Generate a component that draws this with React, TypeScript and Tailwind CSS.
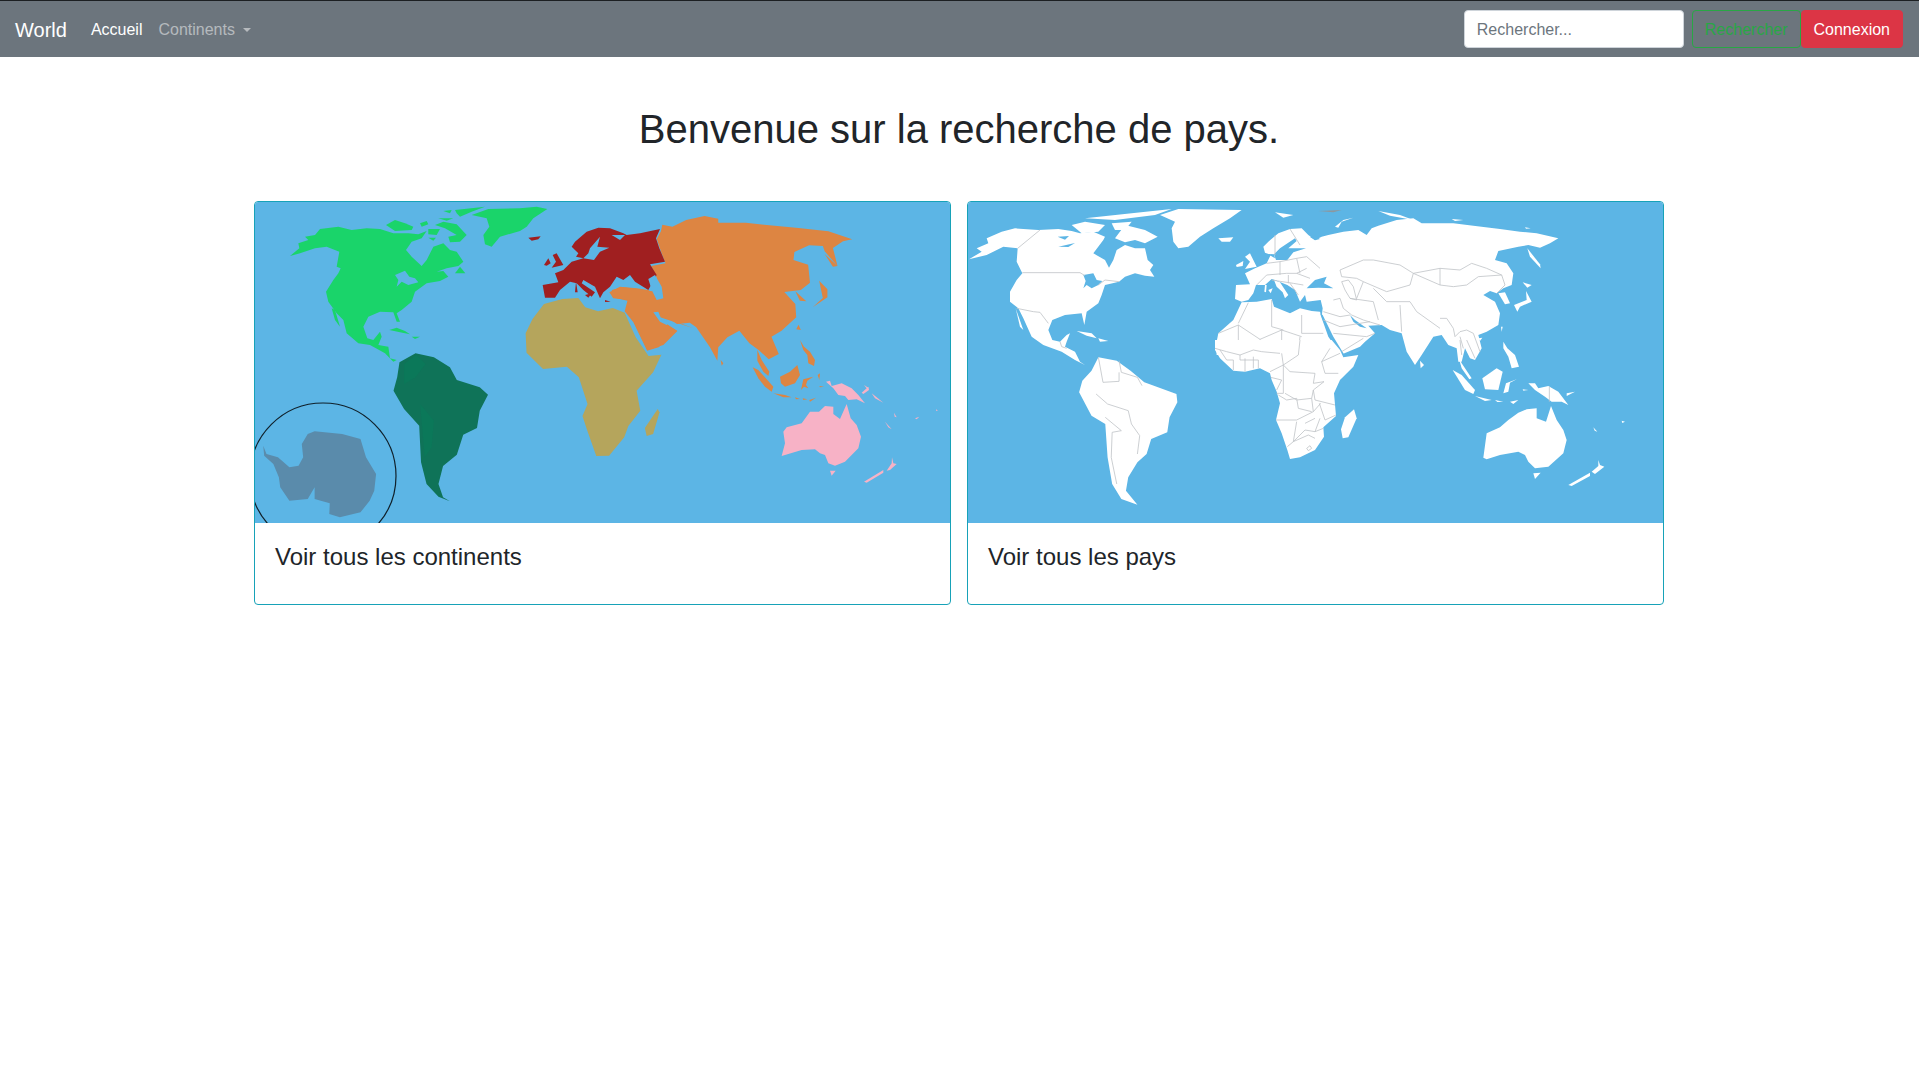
type Shape = { fill: string; d: string };
type Crop = { x: number; y: number; shapes: Shape[]; lines?: string[] };

const BLUE = "#5cb5e5";
const GREEN = "#1ad46a";
const RED = "#a01f20";
const ORANGE = "#dd8542";
const OLIVE = "#b5a55c";
const TEAL = "#0f7358";
const PINK = "#f7b2c6";
const STEEL = "#5a8bab";
const WHITE = "#ffffff";

const shapes = (fill: string, list: string[]): Shape[] => list.map((d) => ({ fill, d }));

// older tracing, stretched coordinates
const CONTINENT_BASE: Shape[] = [
  ...shapes(ORANGE, [
    "M905 122 L908 102 L930 108 L960 88 L1000 76 L1030 84 L1030 96 L1090 96 L1130 102 L1205 112 L1270 122 L1322 146 L1302 152 L1280 172 L1290 226 L1262 182 L1258 166 L1228 164 L1196 184 L1194 208 L1226 222 L1230 276 L1210 298 L1174 304 L1198 340 L1200 380 L1168 420 L1146 438 L1162 490 L1140 506 L1120 480 L1098 458 L1076 420 L1050 440 L1030 470 L1028 510 L1012 470 L982 410 L968 396 L940 400 L902 366 L896 376 L918 402 L940 420 L900 470 L875 480 L845 395 L826 362 L832 330 L800 320 L798 298 L822 290 L858 296 L886 302 L896 262 L884 226 L915 218 L905 182 L896 145 Z",
    "M1262 190 L1290 226 L1280 228 Z",
    "M1236 350 L1268 320 L1268 296 L1250 270 L1258 322 Z",
    "M1198 302 L1222 332 L1208 330 Z",
    "M1205 402 L1210 418 L1200 416 Z",
  ]),
  ...shapes(OLIVE, [
    "M650 340 L690 325 L725 322 L740 350 L768 362 L800 352 L826 366 L850 440 L878 496 L906 492 L888 545 L852 600 L860 660 L834 706 L825 740 L792 795 L764 796 L744 718 L734 676 L745 640 L726 560 L700 528 L648 535 L612 486 L610 428 L625 385 Z",
    "M898 655 L902 665 L888 730 L874 736 L870 712 Z",
  ]),
  ...shapes(TEAL, [
    "M335 515 L370 488 L410 500 L445 530 L460 568 L510 590 L528 612 L510 660 L504 712 L474 732 L460 792 L430 826 L420 880 L430 920 L445 932 L420 918 L394 880 L382 815 L378 705 L345 655 L322 600 L330 560 Z",
  ]),
  ...shapes("#0b7859", ["M345 520 L372 492 L392 520 L370 560 L345 580 Z", "M380 640 L410 690 L405 770 L390 800 Z"]),
  ...shapes(STEEL, [
    "M38 765 L45 790 L70 800 L95 830 L115 825 L125 800 L122 760 L135 730 L150 722 L210 730 L250 745 L262 800 L284 850 L280 900 L270 930 L250 965 L205 980 L182 970 L183 938 L150 925 L150 890 L135 925 L95 930 L75 890 L72 860 L60 820 L40 795 Z",
  ]),
];

const CONTINENT_CROPS: Crop[] = [
  {
    x: 280,
    y: 205,
    shapes: [
      ...shapes(GREEN, [
        "M30 153 L58 130 L55 115 L85 105 L75 95 L105 90 L120 72 L175 65 L215 75 L260 70 L300 72 L340 85 L385 85 L415 88 L440 78 L425 100 L395 110 L378 135 L395 155 L425 183 L440 165 L460 125 L490 115 L510 135 L530 140 L550 170 L535 183 L500 190 L470 200 L490 198 L505 215 L480 228 L440 235 L405 260 L395 290 L365 315 L350 325 L360 350 L350 350 L340 322 L300 320 L265 335 L250 365 L262 400 L280 405 L300 380 L305 395 L295 420 L325 425 L330 460 L350 465 L340 470 L315 445 L270 420 L235 415 L200 385 L190 345 L170 325 L145 290 L138 260 L160 225 L175 205 L182 190 L170 185 L178 140 L140 125 L105 130 L60 145 Z",
        "M155 310 L165 315 L180 365 L165 345 Z",
        "M318 60 L345 45 L375 55 L400 65 L395 75 L345 78 Z",
        "M420 55 L440 48 L445 58 L425 65 Z",
        "M445 72 L480 72 L470 90 L445 88 Z",
        "M465 60 L490 50 L530 58 L560 90 L540 110 L510 112 L505 95 L530 90 L495 70 Z",
        "M445 98 L468 98 L460 107 Z",
        "M475 40 L520 40 L500 47 Z",
        "M490 18 L515 15 L510 25 Z",
        "M525 15 L615 5 L575 20 L540 35 L530 25 Z",
        "M575 30 L625 12 L720 10 L770 5 L802 12 L760 40 L740 65 L720 78 L660 95 L635 125 L615 118 L610 90 L628 65 L620 40 Z",
        "M525 205 L540 185 L556 205 Z",
        "M328 375 L350 368 L375 378 L390 388 L360 382 Z",
        "M395 395 L420 395 L405 402 Z",
      ]),
      ...shapes(BLUE, ["M345 210 L375 197 L388 215 L405 220 L415 232 L385 240 L365 230 L350 245 L355 225 Z"]),
    ],
  },
  {
    x: 520,
    y: 205,
    shapes: [
      ...shapes(ORANGE, [
        "M268 262 L300 245 L350 250 L385 255 L420 300 L470 350 L520 370 L400 330 L472 378 L430 420 L382 435 L325 318 L328 285 L280 280 Z",
      ]),
      ...shapes(RED, [
        "M68 240 L115 232 L105 205 L130 195 L155 170 L190 160 L168 155 L175 145 L155 125 L165 110 L200 80 L235 68 L270 70 L310 85 L320 90 L360 85 L420 72 L408 100 L418 130 L435 170 L390 178 L410 210 L385 255 L345 230 L330 210 L310 225 L290 215 L270 245 L250 262 L240 280 L225 245 L190 225 L185 235 L225 262 L215 275 L190 255 L170 235 L150 230 L120 255 L105 278 L75 278 Z",
        "M72 180 L85 160 L92 175 L80 182 Z",
        "M98 150 L110 145 L130 180 L95 188 L108 170 Z",
        "M25 98 L62 94 L55 103 L35 107 Z",
        "M195 270 L215 265 L205 278 Z",
        "M168 230 L173 262 L165 262 Z",
        "M255 285 L272 290 L255 291 Z",
      ]),
      ...shapes(BLUE, [
        "M210 130 L240 95 L232 125 L268 128 L240 140 L222 165 L190 160 L205 145 Z",
        "M275 90 L315 90 L300 105 Z",
        "M385 222 L405 210 L425 245 L430 280 L410 285 L395 255 Z",
        "M400 322 L415 320 L425 345 L450 350 L440 360 L420 350 Z",
      ]),
    ],
  },
  {
    x: 720,
    y: 340,
    shapes: [
      ...shapes(ORANGE, [
        "M112 30 L125 60 L148 95 L145 108 L130 95 L112 62 Z",
        "M98 82 L115 90 L160 140 L155 155 L135 140 L115 115 Z",
        "M180 110 L210 95 L232 75 L240 105 L225 130 L195 140 L183 130 Z",
        "M243 150 L250 118 L280 110 L262 122 L258 135 L265 145 L252 140 Z",
        "M240 0 L252 20 L270 35 L285 60 L282 78 L265 70 L262 45 L250 30 Z",
        "M160 160 L195 165 L215 172 L190 172 Z",
        "M225 172 L240 177 L228 178 Z",
        "M248 175 L262 178 L250 180 Z",
        "M268 180 L288 173 L270 185 Z",
        "M293 105 L300 100 L298 120 Z",
        "M298 138 L312 140 L300 142 Z",
        "M2 60 L10 70 L5 77 Z",
      ]),
      ...shapes(PINK, [
        "M318 125 L330 122 L335 138 L365 130 L395 145 L415 165 L435 190 L410 178 L385 180 L375 168 L355 165 L340 145 Z",
        "M190 275 L200 262 L245 250 L270 215 L297 215 L315 198 L340 200 L340 222 L360 237 L380 192 L392 235 L410 255 L423 290 L415 325 L375 365 L345 377 L325 370 L315 345 L300 340 L285 328 L245 330 L185 348 L195 310 Z",
        "M330 392 L347 392 L335 407 Z",
        "M432 425 L490 390 L490 398 L440 428 Z",
        "M500 392 L515 370 L516 352 L520 370 L530 372 L510 390 Z",
        "M425 158 L445 140 L447 150 L430 162 Z",
        "M432 135 L447 145 L440 145 Z",
        "M455 160 L470 172 L490 188 L465 175 Z",
        "M495 245 L515 268 L505 262 Z",
        "M585 235 L598 230 L590 238 Z",
        "M522 218 L530 232 L524 230 Z",
        "M648 208 L654 212 L648 212 Z",
      ]),
    ],
  },
];

const COUNTRY_BASE: Shape[] = shapes(WHITE, [
  "M300 500 L340 510 L370 540 L400 575 L470 610 L472 635 L455 680 L450 725 L415 745 L405 790 L385 815 L365 860 L360 900 L385 942 L350 925 L330 880 L320 800 L315 700 L285 675 L258 605 L265 570 L285 540 Z",
]);

const COUNTRY_BASE_LINES: string[] = [
  "M310 575 L345 572 L345 545 M295 610 L320 640 L365 660 L372 700 L390 735 L385 790",
  "M315 680 L350 720 L330 725 L328 800 L340 880",
  "M345 510 L350 545 L385 560 L395 585 M300 500 L310 575",
];

const COUNTRY_CROPS: Crop[] = [
  {
    x: 965,
    y: 205,
    shapes: [
      ...shapes(WHITE, [
        "M12 163 L50 140 L35 130 L70 115 L65 100 L110 80 L150 70 L220 75 L280 72 L320 78 L345 85 L385 80 L420 95 L415 105 L385 145 L420 165 L432 188 L445 165 L455 135 L480 120 L510 130 L540 130 L548 165 L565 180 L555 195 L568 215 L540 212 L510 205 L480 215 L462 230 L420 240 L410 270 L400 295 L365 320 L358 360 L350 325 L300 330 L262 345 L250 375 L262 405 L285 410 L305 390 L315 385 L305 410 L300 425 L330 440 L345 470 L360 480 L330 465 L290 440 L235 420 L200 395 L175 340 L160 310 L135 290 L135 260 L155 225 L172 205 L155 170 L158 130 L115 125 L65 150 Z",
        "M152 310 L175 375 L165 365 Z",
        "M450 100 L480 60 L540 75 L578 95 L540 115 L510 105 L480 112 Z",
        "M320 60 L360 50 L420 60 L400 80 L350 85 Z",
        "M440 55 L500 50 L480 75 L450 75 Z",
        "M360 40 L500 25 L620 12 L570 30 L450 45 Z",
        "M585 30 L640 12 L830 15 L795 40 L745 70 L705 95 L670 125 L640 130 L625 110 L620 70 L630 50 Z",
        "M335 378 L380 385 L395 400 L365 392 Z",
        "M400 400 L430 408 L405 410 Z",
      ]),
      ...shapes(BLUE, [
        "M355 210 L385 205 L395 225 L412 228 L400 240 L380 250 L365 240 L355 250 L362 228 Z",
        "M278 95 L312 93 L300 104 Z",
        "M280 125 L330 114 L310 126 Z",
      ]),
    ],
    lines: [
      "M225 75 L158 130",
      "M172 203 L345 203 L360 212",
      "M155 310 L205 320 L225 322 L250 355",
      "M462 230 L420 225 L400 240",
      "M285 410 L290 425 L305 430",
    ],
  },
  {
    x: 1200,
    y: 205,
    shapes: [
      ...shapes(WHITE, [
        "M125 290 L105 282 L108 240 L150 238 L135 205 L165 190 L200 175 L212 150 L195 143 L190 125 L205 110 L235 85 L270 72 L305 70 L325 90 L345 105 L365 95 L385 90 L430 80 L475 75 L500 90 L515 70 L535 62 L590 45 L640 40 L665 55 L760 55 L820 62 L900 72 L960 80 L1010 85 L1075 100 L1050 115 L1020 128 L985 120 L955 125 L895 138 L885 165 L920 175 L940 205 L935 240 L910 250 L890 265 L870 258 L850 270 L885 290 L900 325 L895 360 L860 380 L835 390 L845 430 L825 465 L810 460 L795 430 L785 470 L775 470 L770 430 L745 420 L725 390 L700 395 L665 450 L645 480 L620 440 L605 385 L570 375 L545 360 L505 362 L525 385 L495 410 L480 425 L428 447 L395 405 L365 335 L368 310 L362 285 L320 290 L315 270 L300 290 L285 255 L262 240 L225 225 L215 222 L195 240 L168 240 L160 265 L145 285 Z",
        "M222 225 L240 232 L265 270 L255 280 L248 262 L230 245 Z",
        "M125 292 L170 290 L215 282 L222 305 L270 325 L300 310 L335 318 L360 320 L368 345 L395 405 L420 440 L420 450 L50 450 L48 420 L55 385 L100 345 Z",
        "M895 265 L915 262 L930 295 L915 298 Z",
        "M942 300 L980 285 L978 258 L995 290 L960 305 L952 320 Z",
        "M968 232 L995 240 L982 248 Z",
        "M982 130 L1020 178 L1022 190 L990 155 Z",
        "M903 365 L908 365 L905 380 Z",
        "M835 400 L847 398 L840 408 Z",
        "M405 65 L430 45 L460 38 L425 50 L415 68 Z",
        "M225 22 L280 30 L250 38 Z",
        "M535 18 L600 30 L640 45 L570 32 Z",
        "M755 42 L790 45 L765 48 Z",
        "M975 67 L992 70 L978 71 Z",
        "M55 100 L100 97 L90 110 L65 110 Z",
        "M135 155 L150 145 L170 185 L135 192 L150 170 Z",
        "M108 180 L130 168 L128 183 L110 186 Z",
        "M205 255 L218 250 L212 265 Z",
        "M195 240 L200 240 L198 262 L193 260 Z",
      ]),
      ...shapes(BLUE, [
        "M222 148 L240 130 L285 100 L290 108 L265 130 L318 130 L280 142 L262 165 L228 165 Z",
        "M198 146 L222 148 L225 160 L212 152 Z",
        "M320 250 L345 225 L380 215 L372 235 L400 250 L355 248 Z",
        "M450 330 L465 345 L500 370 L480 365 L460 350 Z",
        "M360 325 L368 330 L400 395 L432 448 L425 452 L385 395 Z",
        "M360 102 L345 92 L330 96 L345 106 Z",
      ]),
      ...shapes("#8d979e", ["M355 18 L425 15 L400 22 Z"]),
    ],
    lines: [
      "M55 385 L115 360 L180 403 L245 375 L305 395",
      "M145 293 L115 355",
      "M215 285 L215 365 L250 375",
      "M305 330 L305 385 L370 385",
      "M180 403 L180 440 L115 430 L115 360",
      "M245 375 L245 440 L295 440 L300 395",
      "M370 320 L420 335 L450 330",
      "M400 285 L420 280 L430 310 L455 330 L490 345 L540 360",
      "M450 280 L520 290 L535 345",
      "M370 345 L420 365 L510 350",
      "M400 385 L500 395 L525 385",
      "M425 440 L490 400",
      "M170 240 L200 210 L260 205 L290 205 L320 190",
      "M200 175 L240 170 L290 160 L320 155 L360 190",
      "M290 205 L330 220",
      "M240 170 L240 210",
      "M290 160 L300 205",
      "M215 225 L280 235 L310 240",
      "M270 235 L295 270",
      "M265 210 L265 235",
      "M225 90 L225 150",
      "M270 72 L300 120",
      "M420 195 L490 165 L520 165 L600 180 L640 205 L720 190 L780 195 L815 175 L860 190 L905 210",
      "M420 195 L425 215 L470 220 L490 230 L560 260 L630 240 L640 205",
      "M425 230 L445 225 L460 245 L470 285 L450 280 L435 255 Z",
      "M490 230 L470 280",
      "M520 250 L560 290 L630 290 L650 320 L720 370",
      "M600 300 L605 380",
      "M720 240 L760 245 L800 240 L835 215 L905 210 L915 240",
      "M720 190 L720 240 L640 205",
      "M720 340 L740 340 L760 370 L765 395 L780 380 L800 375 L820 385 L840 440",
      "M780 395 L790 430",
      "M890 265 L915 240",
    ],
  },
  {
    x: 1200,
    y: 340,
    shapes: shapes(WHITE, [
      "M45 30 L60 55 L100 92 L135 95 L180 85 L210 100 L215 120 L230 155 L240 190 L228 240 L245 280 L262 330 L270 357 L300 352 L345 330 L372 290 L370 262 L408 228 L402 160 L420 120 L460 80 L475 45 L430 52 L420 30 L395 0 L45 0 Z",
      "M462 208 L470 235 L445 292 L428 295 L423 268 L435 232 Z",
    ]),
    lines: [
      "M45 25 L80 35 L120 45 L160 30 L185 35 L240 40",
      "M245 40 L250 75 L270 95 L345 100",
      "M300 0 L295 45 L250 75",
      "M390 25 L365 65 L375 100 L415 100",
      "M420 40 L365 65",
      "M345 100 L340 130 L372 125 L340 150 L345 180 L405 195",
      "M210 95 L250 75 L250 160 L230 160",
      "M230 150 L245 120 L212 112",
      "M255 160 L290 180 L335 175 L340 150",
      "M235 165 L260 180 L290 175 L295 205 L335 215",
      "M335 175 L340 215 L362 190",
      "M228 240 L290 240 L340 215",
      "M290 245 L280 305 L315 270 L345 275 L360 235",
      "M315 250 L345 235",
      "M358 190 L375 240 L408 225",
      "M345 275 L370 265",
      "M262 320 L280 305 L325 285 L345 295",
      "M320 325 L330 317 L335 325 L325 332 Z",
      "M60 30 L80 60 L100 60 L100 90",
      "M135 55 L135 95",
      "M160 50 L160 85",
      "M120 45 L120 60 L175 60 L175 85",
    ],
  },
  {
    x: 1420,
    y: 340,
    shapes: shapes(WHITE, [
      "M190 353 L200 280 L240 262 L265 240 L295 218 L320 208 L350 205 L350 235 L378 245 L393 198 L410 240 L430 270 L440 300 L430 340 L385 380 L345 385 L325 365 L315 345 L295 335 L240 345 L200 358 Z",
      "M340 400 L362 398 L345 417 Z",
      "M445 435 L510 398 L510 408 L455 438 Z",
      "M515 395 L535 378 L535 360 L540 375 L553 380 L525 402 Z",
      "M325 130 L345 130 L355 145 L385 138 L415 155 L445 195 L425 185 L395 185 L375 170 L345 150 Z",
      "M187 115 L230 85 L248 95 L235 150 L195 148 Z",
      "M98 90 L125 105 L165 150 L160 162 L135 150 Z",
      "M165 168 L215 180 L195 183 Z",
      "M225 180 L250 185 L232 186 Z",
      "M270 185 L295 180 L280 192 Z",
      "M250 160 L258 130 L290 118 L270 128 L265 155 Z",
      "M250 5 L262 25 L285 45 L297 80 L275 85 L265 50 L250 25 Z",
      "M308 148 L325 150 L310 152 Z",
      "M440 160 L465 155 L440 168 Z",
      "M520 262 L532 275 L524 272 Z",
      "M605 242 L615 245 L607 249 Z",
      "M115 50 L125 70 L155 115 L148 118 L125 85 Z",
      "M0 62 L12 75 L2 85 Z",
    ]),
    lines: ["M388 140 L388 185", "M120 0 L125 45", "M140 0 L165 55"],
  },
];

function WorldMap({ x0, base, crops, baseLines, baseTransform }: {
  x0: number;
  base: Shape[];
  crops: Crop[];
  baseLines?: string[];
  baseTransform: string;
}) {
  return (
    <svg viewBox="0 0 2085 963" preserveAspectRatio="none" className="block h-[321px] w-full bg-[#5cb5e5]">
      <g transform={baseTransform}>
        {base.map((s) => <path key={s.d} d={s.d} fill={s.fill} />)}
        {baseLines?.map((d) => (
          <path key={d} d={d} fill="none" stroke="#bfc3c6" strokeWidth="0.8" vectorEffect="non-scaling-stroke" />
        ))}
      </g>
      {crops.map((crop) => (
        <g key={crop.x + "-" + crop.y} transform={`translate(${(crop.x - x0) * 3} ${(crop.y - 202) * 3})`}>
          {crop.shapes.map((s) => <path key={s.d} d={s.d} fill={s.fill} />)}
          {crop.lines?.map((d) => (
            <path key={d} d={d} fill="none" stroke="#bfc3c6" strokeWidth="0.8" vectorEffect="non-scaling-stroke" />
          ))}
        </g>
      ))}
    </svg>
  );
}

function ContinentMap() {
  return (
    <div className="relative">
      <WorldMap x0={255} base={CONTINENT_BASE} crops={CONTINENT_CROPS} baseTransform="scale(1.376 1) translate(-20 -34)" />
      <svg viewBox="0 0 695 321" className="absolute inset-0 h-[321px] w-full">
        <ellipse cx="68" cy="274" rx="73" ry="73" fill="none" stroke="#10202a" strokeWidth="1.2" />
      </svg>
    </div>
  );
}

function CountryMap() {
  return (
    <WorldMap
      x0={968}
      base={COUNTRY_BASE}
      baseLines={COUNTRY_BASE_LINES}
      crops={COUNTRY_CROPS}
      baseTransform="scale(1.3774 1) translate(-16 -34)"
    />
  );
}

function Card({ title, children }: { title: string; children: React.ReactNode }) {
  return (
    <div className="flex-1 overflow-hidden rounded border border-[#17a2b8] bg-white">
      {children}
      <div className="h-[81px] px-5 pt-[19px]">
        <h4 className="text-2xl leading-[29px] text-[#212529]">{title}</h4>
      </div>
    </div>
  );
}

export default function App() {
  return (
    <div className="min-h-screen bg-white font-['Liberation_Sans',sans-serif] text-base text-[#212529]">
      <nav className="flex h-[57px] items-center border-t border-[#1c1f22] bg-[#6c757d] pr-4 pl-[15px]">
        <a className="mr-4 pt-0.5 text-xl text-white">World</a>
        <a className="px-2 pt-0.5 text-white">Accueil</a>
        <a className="flex items-center px-2 pt-0.5 text-white/50">
          Continents
          <span className="ml-[8px] border-x-[4.8px] border-t-[4.8px] border-x-transparent border-t-white/50" />
        </a>
        <div className="ml-auto flex items-center">
          <input
            placeholder="Rechercher..."
            className="mr-2 h-[38px] w-[220px] rounded border border-[#ced4da] bg-white px-3 pt-0.5 text-[#495057] placeholder-[#6c757d]"
          />
          <button className="h-[38px] rounded border border-[#28a745] px-3 pt-0.5 text-[#28a745]">Rechercher</button>
          <button className="h-[38px] rounded border border-[#dc3545] bg-[#dc3545] px-3 pt-0.5 text-white">Connexion</button>
        </div>
      </nav>

      <main className="ml-[254px] w-[1410px]">
        <h1 className="mt-12 mb-12 text-center text-[40px] leading-[48px] font-normal">
          Benvenue sur la recherche de pays.
        </h1>
        <div className="flex gap-4">
          <Card title="Voir tous les continents"><ContinentMap /></Card>
          <Card title="Voir tous les pays"><CountryMap /></Card>
        </div>
      </main>
    </div>
  );
}
